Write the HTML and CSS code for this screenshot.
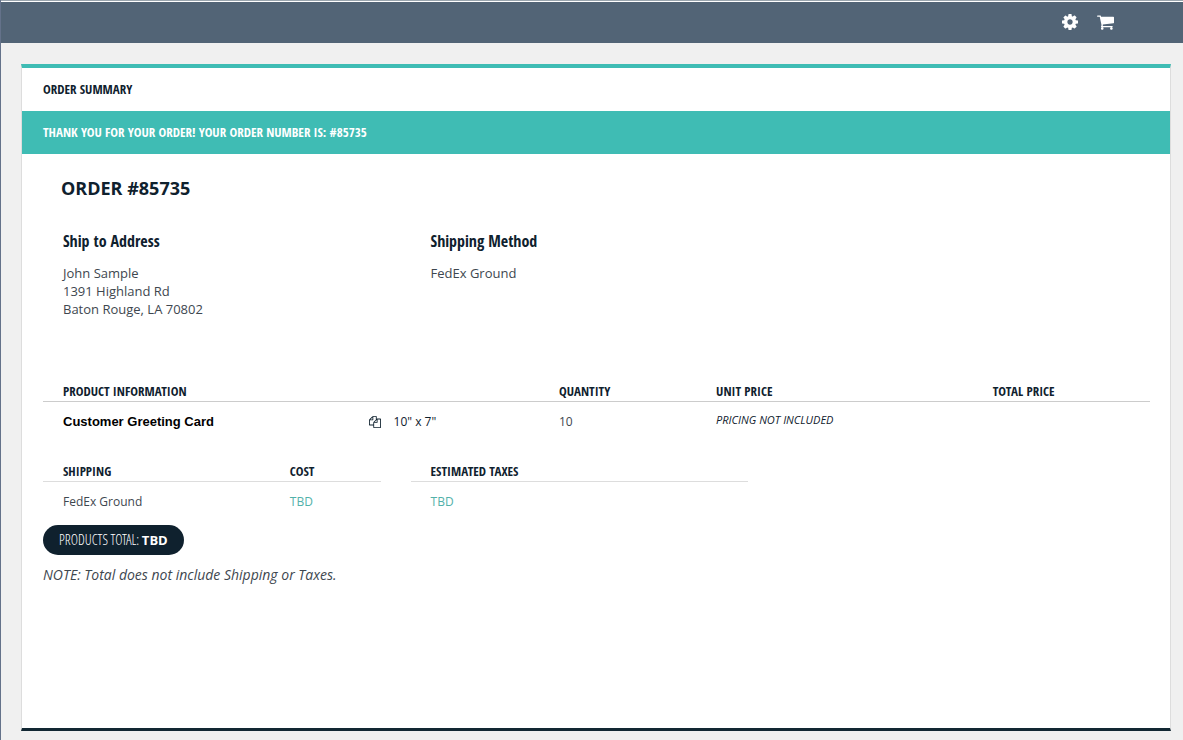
FILE: index.html
```html
<!DOCTYPE html>
<html lang="en">
<head>
<meta charset="utf-8">
<meta name="viewport" content="width=device-width, initial-scale=1">
<title>Order Summary</title>
<link rel="stylesheet" href="styles.css">
</head>
<body>
<header class="topbar">
  <button class="icon-button" type="button" aria-label="Settings">
    <svg width="16" height="16" viewBox="0 0 1536 1536" fill="currentColor" aria-hidden="true"><path d="M1024 768q0-106-75-181t-181-75-181 75-75 181 75 181 181 75 181-75 75-181zm512-109v222q0 12-8 23t-20 13l-185 28q-19 54-39 91 35 50 107 138 10 12 10 25t-9 23q-27 37-99 108t-94 71q-12 0-26-9l-138-108q-44 23-91 38-16 136-29 186-7 28-36 28H657q-14 0-24.500-8.500T621 1506l-28-184q-49-16-90-37l-141 107q-10 9-25 9-14 0-25-11-126-114-165-168-7-10-7-23 0-12 8-23 15-21 51-66.500t54-70.500q-27-50-41-99L29 913q-13-2-21-12.500T0 877V655q0-12 8-23t19-13l186-28q14-46 39-92-40-57-107-138-10-12-10-24 0-10 9-23 26-36 98.500-107.500T337 135q13 0 26 10l138 107q44-23 91-38 16-136 29-186 7-28 36-28h222q14 0 24.500 8.500T915 30l28 184q49 16 90 37l142-107q9-9 24-9 13 0 25 10 129 119 165 170 7 8 7 22 0 12-8 23-15 21-51 66.500t-54 70.500q26 50 41 98l183 28q13 2 21 12.500t8 23.500z"/></svg>
  </button>
  <button class="icon-button" type="button" aria-label="Cart">
    <svg width="17" height="16" viewBox="0 0 1664 1536" fill="currentColor" aria-hidden="true"><path d="M640 1408q0 52-38 90t-90 38-90-38-38-90 38-90 90-38 90 38 38 90zm896 0q0 52-38 90t-90 38-90-38-38-90 38-90 90-38 90 38 38 90zm128-1088v512q0 24-16.500 42.500T1607 896L563 1018q13 60 13 70 0 16-24 64h920q26 0 45 19t19 45-19 45-45 19H448q-26 0-45-19t-19-45q0-11 8-31.500t16-36 21.500-40T445 1079L268 256H64q-26 0-45-19T0 192t19-45 45-19h256q16 0 28.500 6.500T368 150t13 24.500 8 26 5.500 29.500 4.500 26h1201q26 0 45 19t19 45z"/></svg>
  </button>
</header>
<main class="card">
  <h1 class="card-title">Order Summary</h1>
  <p class="banner" role="status">Thank you for your order! Your order number is: #85735</p>
  <div class="card-body">
    <h2 class="order-number">ORDER #85735</h2>
    <div class="details">
      <section>
        <h3 class="detail-title">Ship to Address</h3>
        <address class="detail-text">John Sample<br>1391 Highland Rd<br>Baton Rouge, LA 70802</address>
      </section>
      <section>
        <h3 class="detail-title">Shipping Method</h3>
        <p class="detail-text">FedEx Ground</p>
      </section>
    </div>
    <table class="table products">
      <colgroup><col class="col-name"><col class="col-size"><col class="col-quantity"><col class="col-unit"><col></colgroup>
      <thead>
        <tr><th scope="col" colspan="2">Product Information</th><th scope="col">Quantity</th><th scope="col">Unit Price</th><th scope="col">Total Price</th></tr>
      </thead>
      <tbody>
        <tr>
          <td class="product-name">Customer Greeting Card</td>
          <td><span class="size"><svg width="12" height="12" viewBox="0 0 1792 1792" fill="currentColor" aria-hidden="true"><path d="M1696 384q40 0 68 28t28 68v1216q0 40-28 68t-68 28H736q-40 0-68-28t-28-68v-288H96q-40 0-68-28t-28-68V640q0-40 20-88t48-76L476 68q28-28 76-48t88-20h416q40 0 68 28t28 68v328q68-40 128-40h416zm-544 213L853 896h299V597zM512 213L213 512h299V213zm196 647l316-316V128H640v416q0 40-28 68t-68 28H128v640h512v-256q0-40 20-88t48-76zm956 804V512h-384v416q0 40-28 68t-68 28H768v640h896z"/></svg>10" x 7"</span></td>
          <td>10</td>
          <td class="pricing">PRICING NOT INCLUDED</td>
          <td></td>
        </tr>
      </tbody>
    </table>
    <div class="charges">
      <table class="table">
        <colgroup><col class="col-shipping"><col></colgroup>
        <thead><tr><th scope="col">Shipping</th><th scope="col">Cost</th></tr></thead>
        <tbody><tr><td>FedEx Ground</td><td class="pending">TBD</td></tr></tbody>
      </table>
      <table class="table">
        <thead><tr><th scope="col">Estimated Taxes</th></tr></thead>
        <tbody><tr><td class="pending">TBD</td></tr></tbody>
      </table>
    </div>
    <p class="total">PRODUCTS TOTAL: <strong>TBD</strong></p>
    <p class="note">NOTE: Total does not include Shipping or Taxes.</p>
  </div>
</main>
</body>
</html>
```
FILE: styles.css
```css
* { box-sizing: border-box; }

:root {
  --ink: #0f212e;
  --text: #3e474f;
  --teal: #3fbcb4;
  --condensed: "Open Sans Condensed", "Open Sans", sans-serif;
}

body {
  margin: 0;
  min-height: 100vh;
  display: flex;
  flex-direction: column;
  background: #f0f0f0;
  border-left: 1px solid #64728a;
  color: var(--text);
  font: 14px/18px "Open Sans", sans-serif;
}

h1, h2, h3, p { margin: 0; }

.topbar {
  display: flex;
  justify-content: flex-end;
  align-items: center;
  gap: 19px;
  height: 43px;
  padding-right: 69px;
  background: #526476;
  border-top: 1px solid #9aa5ae;
  box-shadow: inset 0 1px #ffffff;
}

.icon-button {
  display: flex;
  padding: 0;
  border: 0;
  background: none;
  color: #ffffff;
  cursor: pointer;
}

.card {
  flex: 1;
  margin: 21px 12px 9px 20px;
  background: #ffffff;
  border: 1px solid #dddddd;
  border-top: 4px solid var(--teal);
  border-bottom: 3px solid #122733;
}

.card-title, .banner {
  padding: 0 21px;
  font: 700 13px/43px var(--condensed);
  text-transform: uppercase;
}

.card-title { color: var(--ink); }

.banner {
  background: var(--teal);
  color: #ffffff;
}

.card-body { padding: 24px 20px 24px 21px; }

.order-number {
  padding-left: 18px;
  color: var(--ink);
  font-size: 18px;
  font-weight: 700;
  line-height: 20px;
}

.details {
  display: grid;
  grid-template-columns: 33.2% 1fr;
  margin-top: 32px;
}

.details > section { padding-left: 20px; }

.detail-title {
  color: var(--ink);
  font: 700 16px/22px var(--condensed);
}

.detail-text {
  margin-top: 12px;
  font-size: 13px;
  font-style: normal;
}

.table {
  width: 100%;
  border-collapse: collapse;
  table-layout: fixed;
  font-size: 12px;
}

.table th {
  height: 20px;
  padding: 0 0 0 20px;
  border-bottom: 1px solid #dddddd;
  color: var(--ink);
  font: 700 13px/18px var(--condensed);
  text-align: left;
  text-transform: uppercase;
}

.table td {
  height: 40px;
  padding: 2px 0 0 20px;
}

.products { margin-top: 63px; }
.products th { border-bottom-color: #cccccc; }

.col-name { width: 27.6%; }
.col-size { width: 17.2%; }
.col-quantity { width: 14.2%; }
.col-unit { width: 25%; }
.col-shipping { width: 67.2%; }

.table .product-name {
  color: #000000;
  font: 700 13px/18px "Liberation Sans", Arial, sans-serif;
}

.size {
  display: flex;
  align-items: center;
  gap: 13px;
  color: var(--ink);
}

.table .pricing {
  padding: 0 0 2px 20px;
  color: var(--ink);
  font-size: 11px;
  font-style: italic;
}

.charges {
  display: grid;
  grid-template-columns: 1fr 1fr;
  gap: 30px;
  width: 63.7%;
  margin-top: 20px;
}

.table .pending { color: #52b1aa; }

.total {
  width: fit-content;
  margin-top: 4px;
  padding: 0 16px;
  border-radius: 15px;
  background: var(--ink);
  color: #ffffff;
  font: 300 14px/29px "Open Sans Condensed Light", var(--condensed);
}

.total strong {
  font-family: "Open Sans", sans-serif;
  font-size: 13px;
  font-weight: 700;
}

.note {
  margin-top: 11px;
  font-style: italic;
}
```
